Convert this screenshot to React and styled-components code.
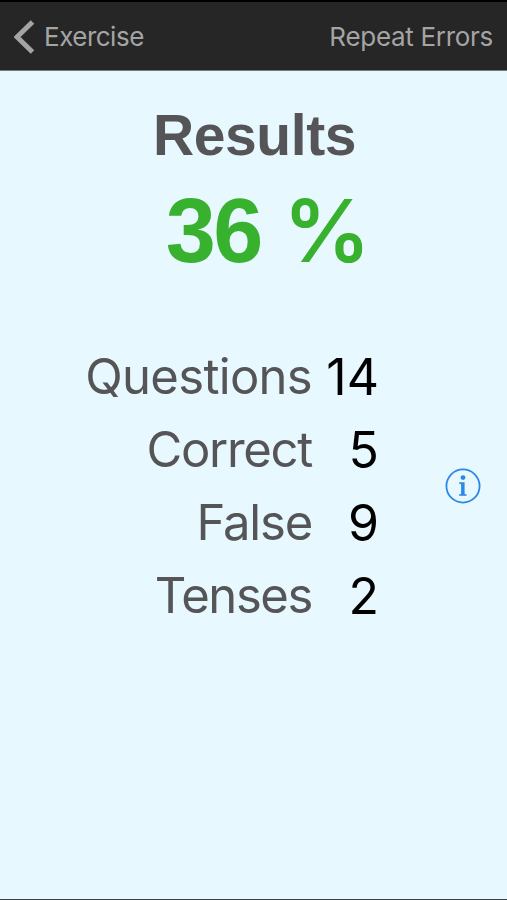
import React from "react";
import styled, { createGlobalStyle } from "styled-components";

const GlobalStyle = createGlobalStyle`
  * {
    box-sizing: border-box;
  }

  body {
    margin: 0;
    background-color: #e7f8ff;
    font-family: Inter, "Liberation Sans", sans-serif;
  }
`;

const Screen = styled.div`
  display: flex;
  flex-direction: column;
  width: 507px;
  height: 900px;
  overflow: hidden;
  background-color: #e7f8ff;
  border-top: 2px solid #000;
  border-bottom: 1px solid #3c4145;
`;

const Navbar = styled.nav`
  display: flex;
  flex-shrink: 0;
  align-items: center;
  justify-content: space-between;
  height: 69px;
  padding: 2px 14px 0;
  background-color: #262626;
  border-bottom: 1px solid #777a7c;
`;

const NavButton = styled.button`
  display: flex;
  align-items: center;
  gap: 9px;
  padding: 0;
  border: none;
  background-color: transparent;
  color: #a4a4a4;
  font-family: inherit;
  font-size: 26px;
  line-height: 30px;
  letter-spacing: ${({ $spacing }) => $spacing};
  cursor: pointer;
`;

const Summary = styled.header`
  display: flex;
  flex-direction: column;
  align-items: center;
  padding-top: 34px;
  font-family: "Liberation Sans", sans-serif;
`;

const Title = styled.h1`
  margin: 0 0 0 2px;
  color: #555557;
  font-size: 57px;
  line-height: 60px;
  letter-spacing: -0.4px;
`;

const Score = styled.div`
  margin: 21px 0 0 27px;
  color: #38b22e;
  font-size: 90px;
  font-weight: bold;
  line-height: 90px;
  letter-spacing: -2.5px;
`;

const Percent = styled.span`
  font-family: Inter, sans-serif;
  font-size: 87px;
  font-weight: 600;
  line-height: 1;
`;

const Stats = styled.main`
  display: flex;
  align-items: center;
  justify-content: space-between;
  margin-top: 64px;
  padding: 0 26px 0 60px;
`;

const List = styled.dl`
  display: grid;
  grid-template-columns: 252px 67px;
  grid-auto-rows: 73px;
  align-items: center;
  margin: 0;
  text-align: right;
  font-size: 49px;
`;

const Label = styled.dt`
  color: #555557;
  letter-spacing: ${({ $spacing }) => $spacing};
`;

const Value = styled.dd`
  margin: 0;
  color: #000;
  font-size: 50px;
`;

const InfoButton = styled.button`
  display: flex;
  padding: 0;
  border: none;
  background-color: transparent;
  cursor: pointer;
`;

const stats = [
  { label: "Questions", value: 14, spacing: "-0.7px" },
  { label: "Correct", value: 5, spacing: "-1.3px" },
  { label: "False", value: 9, spacing: "-1.2px" },
  { label: "Tenses", value: 2, spacing: "-1.4px" },
];

const BackIcon = () => (
  <svg width="21" height="34" viewBox="0 0 21 34" fill="none">
    <path d="M18.5 2 3 17l15.5 15" stroke="#a4a4a4" strokeWidth="5" />
  </svg>
);

const InfoIcon = () => (
  <svg width="36" height="36" viewBox="0 0 36 36" fill="none">
    <circle cx="18" cy="18" r="16.6" stroke="#2b87e8" strokeWidth="1.8" />
    <circle cx="18" cy="9.6" r="2.4" fill="#2b87e8" />
    <path
      d="M14.1 14.3h5.5v11.6l2 .6v1.2h-7.5v-1.2l2-.6v-9.7l-2-.6z"
      fill="#2b87e8"
    />
  </svg>
);

const App = () => {
  return (
    <>
      <GlobalStyle />
      <Screen>
        <Navbar>
          <NavButton $spacing="-0.5px">
            <BackIcon />
            Exercise
          </NavButton>
          <NavButton $spacing="-0.3px">Repeat Errors</NavButton>
        </Navbar>
        <Summary>
          <Title>Results</Title>
          <Score>
            36 <Percent>%</Percent>
          </Score>
        </Summary>
        <Stats>
          <List>
            {stats.map(({ label, value, spacing }) => (
              <React.Fragment key={label}>
                <Label $spacing={spacing}>{label}</Label>
                <Value>{value}</Value>
              </React.Fragment>
            ))}
          </List>
          <InfoButton aria-label="Info">
            <InfoIcon />
          </InfoButton>
        </Stats>
      </Screen>
    </>
  );
};

export default App;
